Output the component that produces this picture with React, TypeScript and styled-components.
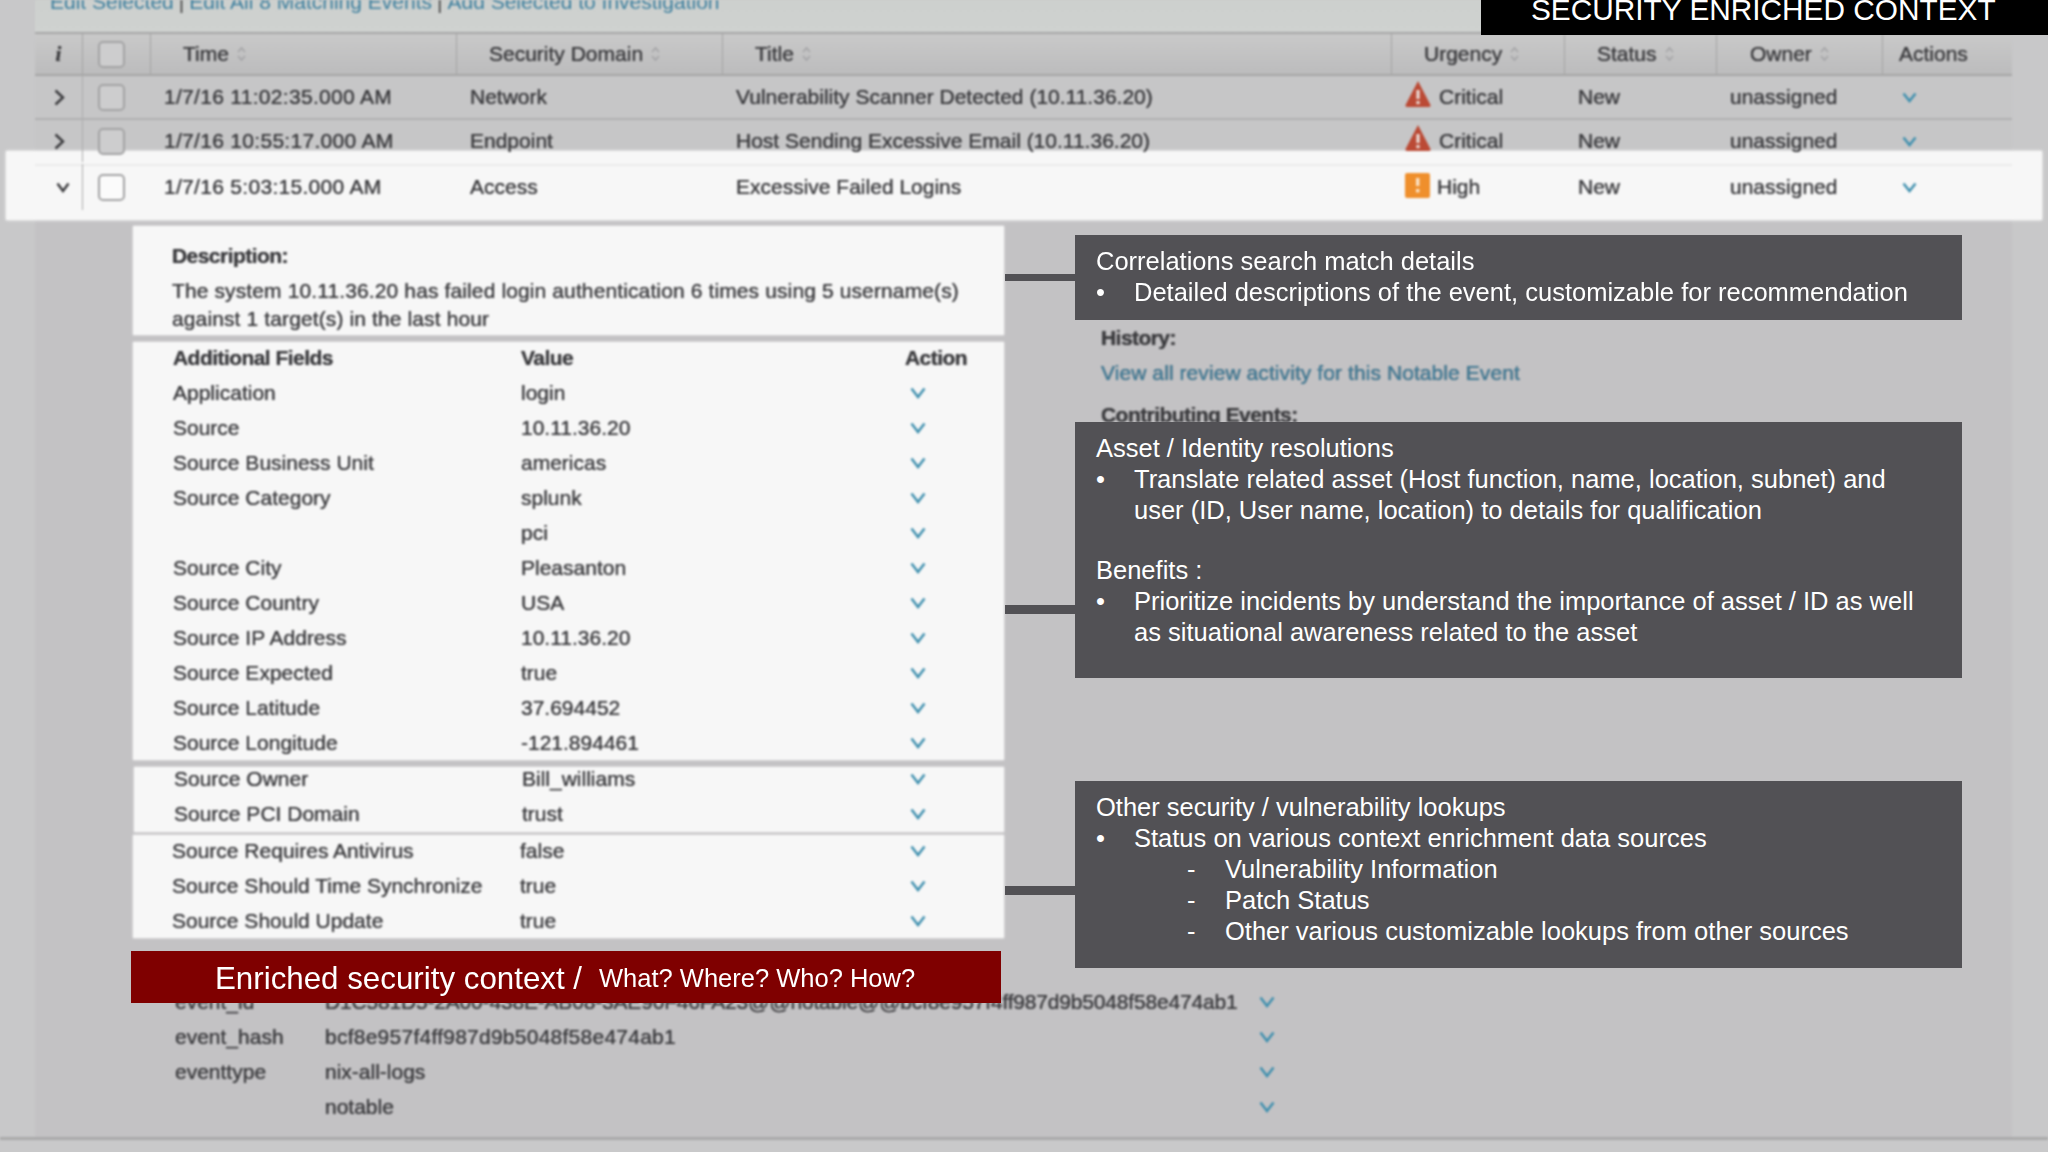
import React from "react";
import styled, { createGlobalStyle } from "styled-components";

const Global = createGlobalStyle`
  html, body { margin: 0; padding: 0; background: #c8c8c9; }
  body { font-family: "Liberation Sans", Arial, sans-serif; }
`;

const Stage = styled.div`
  position: relative;
  width: 2048px;
  height: 1152px;
  overflow: hidden;
  background: #c8c8c9;
`;
const Screen = styled.div`
  width: 2048px;
  height: 1152px;
  display: flex;
  flex-direction: column;
  filter: blur(0.8px);
  color: #3a3a3d;
  font-size: 21px;
  text-shadow: 0 0 0.7px #3a3a3d;
`;
const Main = styled.main`
  margin-left: 35px;
  width: 1977px;
  height: 1137px;
  flex: none;
  background: #c3c2c4;
`;
const Footer = styled.footer`
  flex: 1;
  background: #c9c9ca;
  border-top: 3px solid #a9a9aa;
`;
const Toolbar = styled.div`
  height: 32px;
  box-sizing: border-box;
  background: linear-gradient(#cdd0ce, #cfd2d0);
  padding: 0 0 18px 15px;
  display: flex;
  align-items: flex-end;
  gap: 5px;
  white-space: nowrap;
  line-height: 24px;
  overflow: hidden;
  text-shadow: none;
`;
const ToolLink = styled.span`
  color: #3d7f9e;
`;
const Pipe = styled.span`
  color: #444;
`;
const Columns = "48px 68px 306px 266px 669px 173px 152px 166px 129px";
const HeadRow = styled.div`
  display: grid;
  grid-template-columns: ${Columns};
  height: 44px;
  box-sizing: border-box;
  border-top: 2px solid #a6a6a6;
  border-bottom: 2px solid #a6a6a6;
  background: linear-gradient(#c9c9c9, #bcbcbd);
`;
const HeadCell = styled.div<{ $pad?: number; $center?: boolean }>`
  display: flex;
  align-items: center;
  justify-content: ${(p) => (p.$center ? "center" : "flex-start")};
  gap: 7px;
  padding-left: ${(p) => p.$pad ?? 0}px;
  border-right: 1px solid #a3a3a3;
  &:last-child { border-right: 0; }
`;
const InfoMark = styled.span`
  font-family: "Liberation Serif", serif;
  font-style: italic;
  font-weight: 700;
`;
const Sort = styled.svg`
  width: 11px;
  height: 16px;
  fill: none;
  stroke: #a4a4a6;
  stroke-width: 1.6;
`;
const Row = styled.div<{ $h: number; $open?: boolean }>`
  position: relative;
  display: grid;
  grid-template-columns: ${Columns};
  height: ${(p) => p.$h}px;
  box-sizing: border-box;
  align-items: center;
  background: ${(p) => (p.$open ? "transparent" : "#c6c6c7")};
  border-bottom: ${(p) => (p.$open ? "0" : "2px solid #b0b0b1")};
  white-space: nowrap;
  ${(p) =>
    p.$open &&
    `&::before {
      content: "";
      position: absolute;
      left: -29px;
      right: -30px;
      top: -13px;
      bottom: -10px;
      background: #f7f7f7;
      box-shadow: 0 0 3px #f7f7f7;
    }
    &::after {
      content: "";
      position: absolute;
      left: 0;
      right: 0;
      top: 0;
      height: 2px;
      background: #ebebeb;
    }`}
`;
const Cell = styled.div<{ $pad?: number; $line?: boolean; $wide?: boolean }>`
  position: relative;
  z-index: 1;
  display: flex;
  align-items: center;
  gap: 8px;
  height: 100%;
  padding-left: ${(p) => p.$pad ?? 0}px;
  letter-spacing: ${(p) => (p.$wide ? "0.3px" : "0")};
  ${(p) => p.$line && "border-right: 1px solid #acacac; box-sizing: border-box;"}
`;
const Check = styled.span<{ $light?: boolean }>`
  display: block;
  width: 27px;
  height: 27px;
  box-sizing: border-box;
  border: 2px solid #a3a3a4;
  border-radius: 5px;
  background: ${(p) => (p.$light ? "#fbfbfb" : "#cdcdce")};
`;
const Detail = styled.div`
  display: grid;
  grid-template-columns: 871px 1fr;
  column-gap: 96px;
  margin: 0 0 0 98px;
  padding-top: 16px;
`;
const LeftCol = styled.div`
  display: flex;
  flex-direction: column;
`;
const Card = styled.section<{ $gap?: number; $shift?: number; $h?: number; $trim?: number }>`
  background: #f7f7f7;
  margin-top: ${(p) => p.$gap ?? 0}px;
  height: ${(p) => (p.$h ? `${p.$h}px` : "auto")};
  box-shadow: 0 0 2px #f0f0f0;
  margin-left: ${(p) => p.$shift ?? 0}px;
  & > :first-child { margin-top: ${(p) => -(p.$trim ?? 0)}px; }
`;
const DescCard = styled(Card)`
  height: 109px;
  box-sizing: border-box;
  padding: 16px 20px 0 39px;
  line-height: 28px;
  & > :first-child { margin-top: 0; }
`;
const Strong = styled.div`
  font-weight: 700;
  letter-spacing: -0.55px;
`;
const Para = styled.div`
  margin-top: 7px;
  letter-spacing: 0.12px;
`;
const FieldRow = styled.div<{ $left?: number }>`
  display: grid;
  grid-template-columns: 348px 1fr 40px;
  height: 35px;
  align-items: center;
  padding-left: ${(p) => p.$left ?? 40}px;
  padding-right: 66px;
  white-space: nowrap;
`;
const FieldHead = styled(FieldRow)`
  font-weight: 700;
  letter-spacing: -0.55px;
  grid-template-columns: 348px 384px 60px;
  padding-right: 0;
`;
const Chevron = styled.svg<{ $c?: string }>`
  fill: none;
  stroke: ${(p) => p.$c ?? "#3e8fae"};
  stroke-width: 2.4;
  justify-self: center;
  flex: none;
`;
const Side = styled.aside`
  padding: 100px 0 0 1px;
  display: flex;
  flex-direction: column;
  white-space: nowrap;
`;
const SideLink = styled.div`
  color: #3d7f9e;
  margin-top: 11px;
  line-height: 24px;
  letter-spacing: 0.08px;
`;
const SideHead = styled(Strong)<{ $top?: number }>`
  margin-top: ${(p) => p.$top ?? 0}px;
  line-height: 24px;
`;
const EventTable = styled.div`
  margin: 46px 0 0 140px;
  width: 1112px;
`;
const EventRow = styled.div`
  display: grid;
  grid-template-columns: 150px 1fr 40px;
  height: 35px;
  align-items: center;
  white-space: nowrap;
`;
const EventValue = styled.span<{ $sp: number }>`
  letter-spacing: ${(p) => p.$sp}px;
`;
const Callout = styled.div<{ $top: number; $h: number; $link: number; $thick: number }>`
  position: absolute;
  left: 1075px;
  top: ${(p) => p.$top}px;
  width: 887px;
  height: ${(p) => p.$h}px;
  box-sizing: border-box;
  background: #525155;
  color: #fff;
  padding: 11px 40px 0 21px;
  font-size: 25.5px;
  line-height: 31px;
  filter: blur(0.3px);
  &::before {
    content: "";
    position: absolute;
    left: -70px;
    width: 70px;
    top: ${(p) => p.$link}px;
    height: ${(p) => p.$thick}px;
    background: #525155;
  }
`;
const Bullet = styled.div`
  display: grid;
  grid-template-columns: 38px 1fr;
`;
const Sub = styled.div`
  display: grid;
  grid-template-columns: 38px 1fr;
  margin-left: 91px;
`;
const Gap = styled.div`
  height: 29px;
`;
const Banner = styled.div`
  position: absolute;
  left: 131px;
  top: 951px;
  width: 870px;
  height: 52px;
  box-sizing: border-box;
  padding: 3px 0 0 84px;
  background: #7f0000;
  color: #fff;
  display: flex;
  align-items: center;
  gap: 17px;
  white-space: nowrap;
  font-size: 31.3px;
  filter: blur(0.3px);
`;
const BannerSmall = styled.span`
  font-size: 25.5px;
`;
const Title = styled.div`
  position: absolute;
  right: 0;
  top: 0;
  width: 567px;
  height: 35px;
  background: #000;
  color: #fff;
  font-size: 29.8px;
  line-height: 20px;
  padding-left: 50px;
  box-sizing: border-box;
  white-space: nowrap;
  overflow: hidden;
`;
const IconNudge = styled.span<{ $up: number; $after: number }>`
  display: flex;
  margin-bottom: ${(p) => p.$up}px;
  margin-right: ${(p) => p.$after}px;
`;

const SortIcon = () => (
  <Sort viewBox="0 0 11 16">
    <path d="M2 6 L5.5 2 L9 6 M2 10 L5.5 14 L9 10" />
  </Sort>
);
const Down = ({ w = 16, h = 12, c }: { w?: number; h?: number; c?: string }) => (
  <Chevron $c={c} width={w} height={h} viewBox={`0 0 ${w} ${h}`}>
    <path d={`M1.5 1.5 L${w / 2} ${h - 2} L${w - 1.5} 1.5`} />
  </Chevron>
);
const Right = () => (
  <Chevron $c="#3a3a3d" width={11} height={17} viewBox="0 0 11 17">
    <path d="M1.5 1.5 L9 8.5 L1.5 15.5" />
  </Chevron>
);
const Warn = () => (
  <svg width="26" height="26" viewBox="0 0 26 26">
    <path d="M13 0 L25.5 24 Q26 26 24 26 L2 26 Q0 26 0.5 24 Z" fill="#bb4a35" />
    <rect x="11.4" y="9" width="3.2" height="9" fill="#eadbd6" />
    <rect x="11.4" y="20" width="3.2" height="3.2" fill="#eadbd6" />
  </svg>
);
const HighIcon = () => (
  <svg width="25" height="25" viewBox="0 0 25 25">
    <rect width="25" height="25" rx="2" fill="#ef8f2c" />
    <rect x="11" y="5" width="3.4" height="8" fill="#fbe3c8" />
    <rect x="11" y="16" width="3.4" height="3.4" fill="#fbe3c8" />
  </svg>
);

const rows = [
  { time: "1/7/16 11:02:35.000 AM", dom: "Network", title: "Vulnerability Scanner Detected (10.11.36.20)", urg: "Critical" },
  { time: "1/7/16 10:55:17.000 AM", dom: "Endpoint", title: "Host Sending Excessive Email (10.11.36.20)", urg: "Critical" },
  { time: "1/7/16 5:03:15.000 AM", dom: "Access", title: "Excessive Failed Logins", urg: "High" },
];
const card1: [string, string][] = [
  ["Application", "login"],
  ["Source", "10.11.36.20"],
  ["Source Business Unit", "americas"],
  ["Source Category", "splunk"],
  ["", "pci"],
  ["Source City", "Pleasanton"],
  ["Source Country", "USA"],
  ["Source IP Address", "10.11.36.20"],
  ["Source Expected", "true"],
  ["Source Latitude", "37.694452"],
  ["Source Longitude", "-121.894461"],
];
const card2: [string, string][] = [
  ["Source Owner", "Bill_williams"],
  ["Source PCI Domain", "trust"],
];
const card3: [string, string][] = [
  ["Source Requires Antivirus", "false"],
  ["Source Should Time Synchronize", "true"],
  ["Source Should Update", "true"],
];
const events: [string, string, number][] = [
  ["event_id", "D1C581D5-2A00-438E-AB08-3AE90F46FA23@@notable@@bcf8e957f4ff987d9b5048f58e474ab1", -0.18],
  ["event_hash", "bcf8e957f4ff987d9b5048f58e474ab1", 0.25],
  ["eventtype", "nix-all-logs", 0],
  ["", "notable", 0],
];
const heads: [string, number][] = [
  ["Time", 32],
  ["Security Domain", 32],
  ["Title", 32],
  ["Urgency", 32],
  ["Status", 32],
  ["Owner", 33],
];

const Fields = ({ list, left }: { list: [string, string][]; left?: number }) => (
  <>
    {list.map(([k, v], i) => (
      <FieldRow key={i} $left={left}>
        <span>{k}</span>
        <span>{v}</span>
        <Down />
      </FieldRow>
    ))}
  </>
);

export default function App() {
  return (
    <Stage>
      <Global />
      <Screen>
        <Main>
          <Toolbar>
            <ToolLink>Edit Selected</ToolLink>
            <Pipe>|</Pipe>
            <ToolLink>Edit All 8 Matching Events</ToolLink>
            <Pipe>|</Pipe>
            <ToolLink>Add Selected to Investigation</ToolLink>
          </Toolbar>
          <HeadRow>
            <HeadCell $center>
              <InfoMark>i</InfoMark>
            </HeadCell>
            <HeadCell $pad={15}>
              <Check />
            </HeadCell>
            {heads.map(([h, pad]) => (
              <HeadCell key={h} $pad={pad}>
                {h}
                <SortIcon />
              </HeadCell>
            ))}
            <HeadCell $pad={16}>Actions</HeadCell>
          </HeadRow>
          {rows.map((r, i) => {
            const open = i === 2;
            return (
              <Row key={i} $h={open ? 46 : 44} $open={open}>
                <Cell $pad={open ? 21 : 19} $line>
                  {open ? <Down w={14} h={11} c="#3a3a3d" /> : <Right />}
                </Cell>
                <Cell $pad={15}>
                  <Check $light={open} />
                </Cell>
                <Cell $pad={13} $wide>{r.time}</Cell>
                <Cell $pad={13}>{r.dom}</Cell>
                <Cell $pad={13}>{r.title}</Cell>
                <Cell $pad={13}>
                  {open ? (
                    <IconNudge $up={4} $after={-1}>
                      <HighIcon />
                    </IconNudge>
                  ) : (
                    <IconNudge $up={6} $after={0}>
                      <Warn />
                    </IconNudge>
                  )}
                  {r.urg}
                </Cell>
                <Cell $pad={13}>New</Cell>
                <Cell $pad={13}>unassigned</Cell>
                <Cell $pad={19}>
                  <Down w={15} h={11} />
                </Cell>
              </Row>
            );
          })}
          <Detail>
            <LeftCol>
              <DescCard>
                <Strong>Description:</Strong>
                <Para>
                  The system 10.11.36.20 has failed login authentication 6 times using 5 username(s) against 1 target(s) in the last hour
                </Para>
              </DescCard>
              <Card $gap={7} $h={418} $trim={2}>
                <FieldHead>
                  <span>Additional Fields</span>
                  <span>Value</span>
                  <span>Action</span>
                </FieldHead>
                <Fields list={card1} />
              </Card>
              <Card $gap={7} $shift={1} $h={65} $trim={6}>
                <Fields list={card2} />
              </Card>
              <Card $gap={3} $h={103} $trim={2}>
                <Fields list={card3} left={39} />
              </Card>
            </LeftCol>
            <Side>
              <SideHead>History:</SideHead>
              <SideLink>View all review activity for this Notable Event</SideLink>
              <SideHead $top={18}>Contributing Events:</SideHead>
            </Side>
          </Detail>
          <EventTable>
            {events.map(([k, v, sp], i) => (
              <EventRow key={i}>
                <span>{k}</span>
                <EventValue $sp={sp}>{v}</EventValue>
                <Down />
              </EventRow>
            ))}
          </EventTable>
        </Main>
        <Footer />
      </Screen>
      <Title>SECURITY ENRICHED CONTEXT</Title>
      <Callout $top={235} $h={85} $link={39} $thick={7}>
        <div>Correlations search match details</div>
        <Bullet>
          <span>•</span>
          <span>Detailed descriptions of the event, customizable for recommendation</span>
        </Bullet>
      </Callout>
      <Callout $top={422} $h={256} $link={183} $thick={9}>
        <div>Asset / Identity resolutions</div>
        <Bullet>
          <span>•</span>
          <span>Translate related asset (Host function, name, location, subnet) and user (ID, User name, location) to details for qualification</span>
        </Bullet>
        <Gap />
        <div>Benefits :</div>
        <Bullet>
          <span>•</span>
          <span>Prioritize incidents by understand the importance of asset / ID as well as situational awareness related to the asset</span>
        </Bullet>
      </Callout>
      <Callout $top={781} $h={187} $link={105} $thick={9}>
        <div>Other security / vulnerability lookups</div>
        <Bullet>
          <span>•</span>
          <span>Status on various context enrichment data sources</span>
        </Bullet>
        <Sub><span>-</span><span>Vulnerability Information</span></Sub>
        <Sub><span>-</span><span>Patch Status</span></Sub>
        <Sub><span>-</span><span>Other various customizable lookups from other sources</span></Sub>
      </Callout>
      <Banner>
        <span>Enriched security context /</span>
        <BannerSmall>What? Where? Who? How?</BannerSmall>
      </Banner>
    </Stage>
  );
}
